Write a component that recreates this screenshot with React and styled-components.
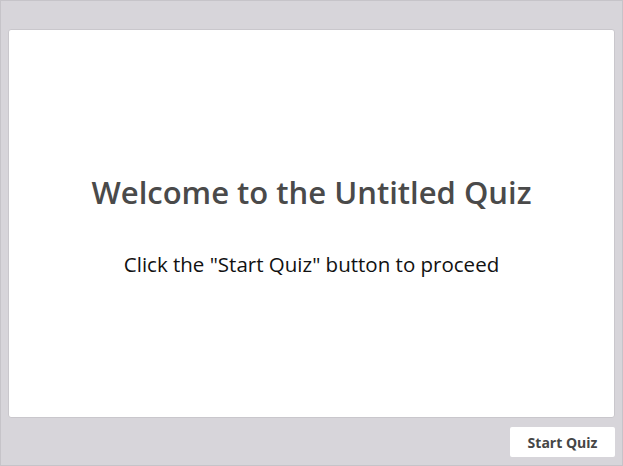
import React from "react";
import styled, { createGlobalStyle } from "styled-components";

const GlobalStyle = createGlobalStyle`
  html, body {
    margin: 0;
    padding: 0;
  }
  body {
    font-family: "Open Sans", "Liberation Sans", sans-serif;
  }
`;

const Frame = styled.div`
  box-sizing: border-box;
  width: 623px;
  height: 466px;
  background: #d7d5da;
  border: 1px solid #c6c4c9;
  padding: 28px 7px 8px 7px;
  display: flex;
  flex-direction: column;
`;

const Card = styled.section`
  box-sizing: border-box;
  height: 390px;
  background: #ffffff;
  border: 1px solid #c9c7cc;
  border-radius: 3px;
  display: flex;
  flex-direction: column;
  align-items: center;
  padding-top: 141px;
`;

const Title = styled.h1`
  margin: 0;
  font-size: 31px;
  font-weight: 600;
  color: #4a4a4a;
  line-height: 42px;
`;

const Subtitle = styled.p`
  margin: 37px 0 0;
  font-size: 20.5px;
  font-weight: 400;
  color: #111111;
  line-height: 28px;
`;

const Footer = styled.div`
  display: flex;
  justify-content: flex-end;
  padding-top: 9px;
`;

const StartButton = styled.button`
  box-sizing: border-box;
  width: 105px;
  height: 30px;
  background: #ffffff;
  border: none;
  border-radius: 2px;
  font-family: "Open Sans", "Liberation Sans", sans-serif;
  font-size: 14px;
  font-weight: 700;
  color: #464646;
  cursor: pointer;
`;

const App = () => {
  return (
    <>
      <GlobalStyle />
      <Frame>
        <Card>
          <Title>Welcome to the Untitled Quiz</Title>
          <Subtitle>Click the "Start Quiz" button to proceed</Subtitle>
        </Card>
        <Footer>
          <StartButton>Start Quiz</StartButton>
        </Footer>
      </Frame>
    </>
  );
};

export default App;
